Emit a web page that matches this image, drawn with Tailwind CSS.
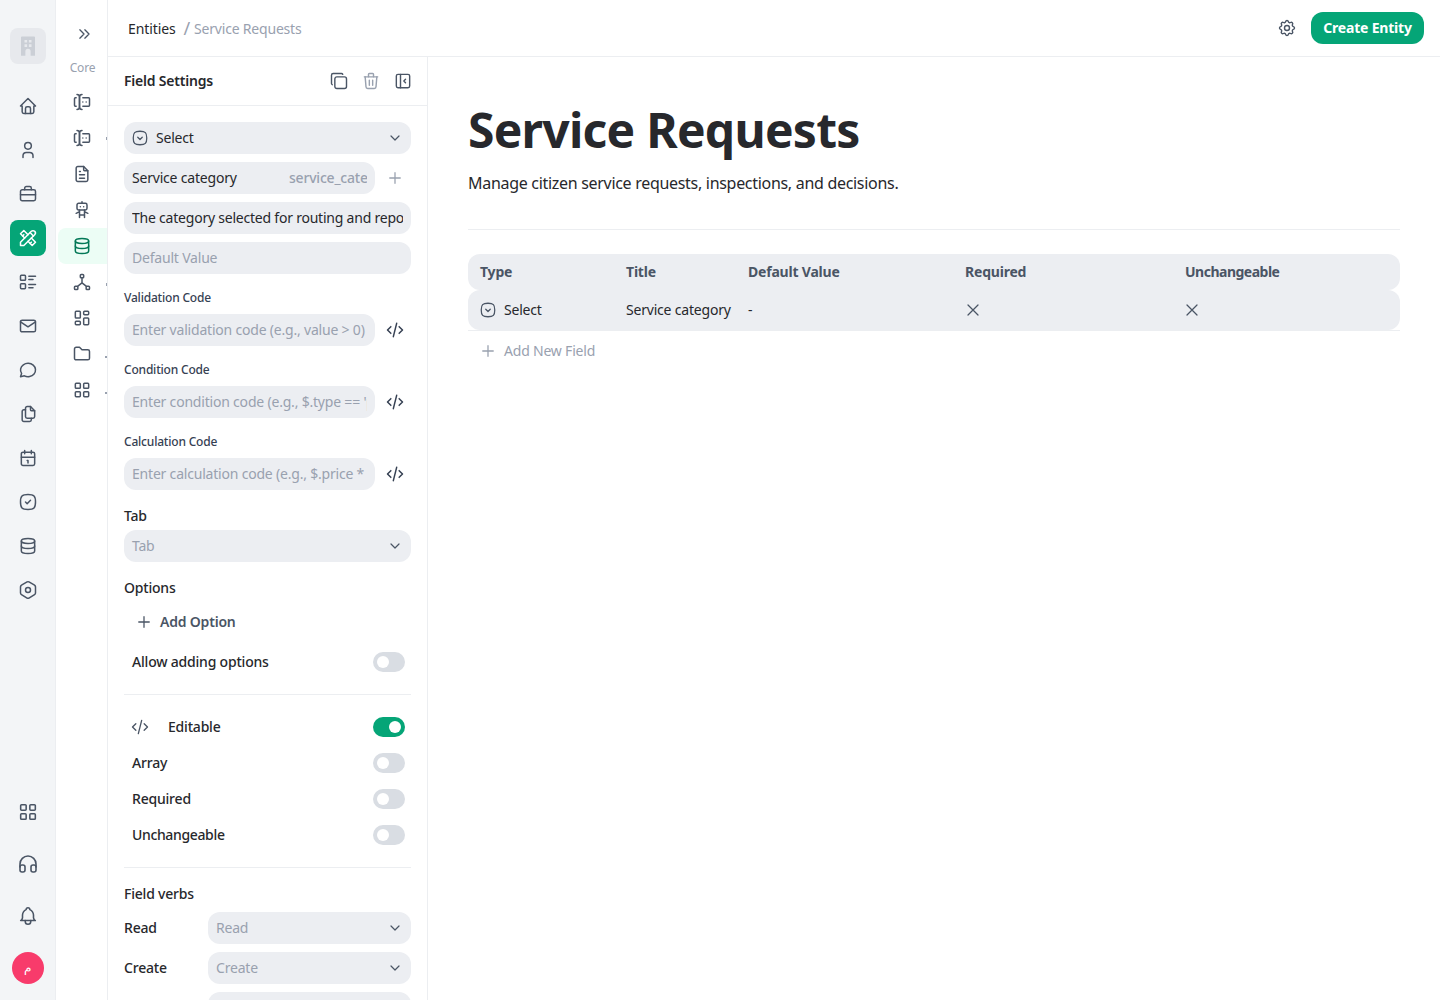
<!DOCTYPE html>
<html lang="en">
<head>
    <meta charset="UTF-8">
    <meta name="viewport" content="width=device-width, initial-scale=1.0">
    <title>Service Requests</title>
    <script src="https://cdn.jsdelivr.net/npm/@tailwindcss/browser@4"></script>
</head>
<body class="bg-white font-['Noto_Sans',sans-serif] tracking-[-0.2px] text-[#27282c] overflow-hidden">
    <svg class="hidden">
        <defs>
            <symbol id="home" viewBox="0 0 24 24"><path d="M5 12H3l9-9 9 9h-2M5 12v7a2 2 0 0 0 2 2h10a2 2 0 0 0 2-2v-7"/><path d="M9 21v-6a2 2 0 0 1 2-2h2a2 2 0 0 1 2 2v6"/></symbol>
            <symbol id="user" viewBox="0 0 24 24"><path d="M8 7a4 4 0 1 0 8 0a4 4 0 0 0-8 0"/><path d="M6 21v-2a4 4 0 0 1 4-4h4a4 4 0 0 1 4 4v2"/></symbol>
            <symbol id="briefcase" viewBox="0 0 24 24"><path d="M3 9a2 2 0 0 1 2-2h14a2 2 0 0 1 2 2v9a2 2 0 0 1-2 2H5a2 2 0 0 1-2-2z"/><path d="M8 7V5a2 2 0 0 1 2-2h4a2 2 0 0 1 2 2v2"/><path d="M3 13h18"/></symbol>
            <symbol id="tools" viewBox="0 0 24 24"><path d="M3 21h4L20 8a1.5 1.5 0 0 0-4-4L3 17v4"/><path d="M14.500 5.500l4 4"/><path d="M12 8L7 3 3 7l5 5"/><path d="M7 8L5.500 9.500"/><path d="M16 12l5 5-4 4-5-5"/><path d="M16 17l-1.500 1.500"/></symbol>
            <symbol id="list" viewBox="0 0 24 24"><path d="M13 5h8M13 9h5M13 15h8M13 19h5"/><rect x="3" y="4" width="6" height="6" rx="1"/><rect x="3" y="14" width="6" height="6" rx="1"/></symbol>
            <symbol id="mail" viewBox="0 0 24 24"><rect x="3" y="5" width="18" height="14" rx="2"/><path d="M3 7l9 6 9-6"/></symbol>
            <symbol id="message" viewBox="0 0 24 24"><path d="M3 20l1.300-3.900C1.976 12.663 2.874 8.228 6.400 5.726c3.526-2.501 8.590-2.296 11.845.48 3.255 2.777 3.695 7.266 1.029 10.501C16.608 19.942 11.659 20.922 7.700 19L3 20"/></symbol>
            <symbol id="files" viewBox="0 0 24 24"><path d="M15 3v4a1 1 0 0 0 1 1h4"/><path d="M18 17h-7a2 2 0 0 1-2-2V5a2 2 0 0 1 2-2h4l5 5v7a2 2 0 0 1-2 2z"/><path d="M16 17v2a2 2 0 0 1-2 2H7a2 2 0 0 1-2-2V9a2 2 0 0 1 2-2h2"/></symbol>
            <symbol id="calendar" viewBox="0 0 24 24"><rect x="4" y="5" width="16" height="16" rx="2"/><path d="M16 3v4M8 3v4M4 11h16M11 15h1M12 15v3"/></symbol>
            <symbol id="check" viewBox="0 0 24 24"><path d="M9 12l2 2 4-4"/><path d="M12 3c7.200 0 9 1.800 9 9s-1.800 9-9 9-9-1.800-9-9 1.800-9 9-9z"/></symbol>
            <symbol id="database" viewBox="0 0 24 24"><ellipse cx="12" cy="6" rx="8" ry="3"/><path d="M4 6v6a8 3 0 0 0 16 0V6"/><path d="M4 12v6a8 3 0 0 0 16 0v-6"/></symbol>
            <symbol id="hexagon" viewBox="0 0 24 24"><path d="M19.875 6.270A2.225 2.225 0 0 1 21 8.218v7.284c0 .809-.443 1.555-1.158 1.948l-6.750 4.270a2.269 2.269 0 0 1-2.184 0l-6.750-4.270A2.225 2.225 0 0 1 3 15.502V8.217c0-.809.443-1.554 1.158-1.947l6.750-3.980a2.330 2.330 0 0 1 2.250 0z"/><circle cx="12" cy="12" r="3"/></symbol>
            <symbol id="grid" viewBox="0 0 24 24"><rect x="4" y="4" width="6" height="6" rx="1"/><rect x="14" y="4" width="6" height="6" rx="1"/><rect x="4" y="14" width="6" height="6" rx="1"/><rect x="14" y="14" width="6" height="6" rx="1"/></symbol>
            <symbol id="headphones" viewBox="0 0 24 24"><rect x="4" y="13" width="5" height="7" rx="2"/><rect x="15" y="13" width="5" height="7" rx="2"/><path d="M4 15v-3a8 8 0 0 1 16 0v3"/></symbol>
            <symbol id="bell" viewBox="0 0 24 24"><path d="M10 5a2 2 0 1 1 4 0 7 7 0 0 1 4 6v3a4 4 0 0 0 2 3H4a4 4 0 0 0 2-3v-3a7 7 0 0 1 4-6"/><path d="M9 17v1a3 3 0 0 0 6 0v-1"/></symbol>
            <symbol id="forms" viewBox="0 0 24 24"><path d="M12 3a3 3 0 0 0-3 3v12a3 3 0 0 0 3 3"/><path d="M6 3a3 3 0 0 1 3 3v12a3 3 0 0 1-3 3"/><path d="M13 7h7a1 1 0 0 1 1 1v8a1 1 0 0 1-1 1h-7"/><path d="M5 7H4a1 1 0 0 0-1 1v8a1 1 0 0 0 1 1h1"/><path d="M17 12h.01M13 12h.01"/></symbol>
            <symbol id="file" viewBox="0 0 24 24"><path d="M14 3v4a1 1 0 0 0 1 1h4"/><path d="M17 21H7a2 2 0 0 1-2-2V5a2 2 0 0 1 2-2h7l5 5v11a2 2 0 0 1-2 2z"/><path d="M9 9h1M9 13h6M9 17h6"/></symbol>
            <symbol id="robot" viewBox="0 0 24 24"><rect x="6" y="4" width="12" height="8" rx="2"/><path d="M12 2v2M9 12v9M15 12v9M5 16l4-2M15 14l4 2M9 18h6M10 8v.01M14 8v.01"/></symbol>
            <symbol id="hierarchy" viewBox="0 0 24 24"><rect x="10" y="3" width="4" height="4" rx="1"/><rect x="3" y="17" width="4" height="4" rx="1"/><rect x="17" y="17" width="4" height="4" rx="1"/><path d="M7 17l5-4 5 4M12 7v6"/></symbol>
            <symbol id="dashboard" viewBox="0 0 24 24"><rect x="4" y="4" width="6" height="8" rx="1"/><rect x="4" y="16" width="6" height="4" rx="1"/><rect x="14" y="12" width="6" height="8" rx="1"/><rect x="14" y="4" width="6" height="4" rx="1"/></symbol>
            <symbol id="folder" viewBox="0 0 24 24"><path d="M5 4h4l3 3h7a2 2 0 0 1 2 2v8a2 2 0 0 1-2 2H5a2 2 0 0 1-2-2V6a2 2 0 0 1 2-2"/></symbol>
            <symbol id="copy" viewBox="0 0 24 24"><rect x="7" y="7" width="14" height="14" rx="2.500"/><path d="M4 16.500A2 2 0 0 1 3 15V5a2 2 0 0 1 2-2h10c.75 0 1.200.4 1.500 1"/></symbol>
            <symbol id="trash" viewBox="0 0 24 24"><path d="M4 7h16M10 11v6M14 11v6"/><path d="M5 7l1 12a2 2 0 0 0 2 2h8a2 2 0 0 0 2-2l1-12"/><path d="M9 7V4a1 1 0 0 1 1-1h4a1 1 0 0 1 1 1v3"/></symbol>
            <symbol id="sidebar" viewBox="0 0 24 24"><rect x="4" y="4" width="16" height="16" rx="2"/><path d="M9 4v16M15 10l-2 2 2 2"/></symbol>
            <symbol id="code" viewBox="0 0 24 24"><path d="M7 8l-4 4 4 4M17 8l4 4-4 4M14 4l-4 16"/></symbol>
            <symbol id="chevron" viewBox="0 0 24 24"><path d="M6 9l6 6 6-6"/></symbol>
            <symbol id="chevrons" viewBox="0 0 24 24"><path d="M7 7l5 5-5 5M13 7l5 5-5 5"/></symbol>
            <symbol id="plus" viewBox="0 0 24 24"><path d="M12 5v14M5 12h14"/></symbol>
            <symbol id="x" viewBox="0 0 24 24"><path d="M18 6L6 18M6 6l12 12"/></symbol>
            <symbol id="select" viewBox="0 0 24 24"><path d="M15 11l-3 3-3-3"/><path d="M12 3c7.200 0 9 1.800 9 9s-1.800 9-9 9-9-1.800-9-9 1.800-9 9-9z"/></symbol>
            <symbol id="gear" viewBox="0 0 24 24"><path d="M10.325 4.317c.426-1.756 2.924-1.756 3.350 0a1.724 1.724 0 0 0 2.573 1.066c1.543-.940 3.310.826 2.370 2.370a1.724 1.724 0 0 0 1.065 2.572c1.756.426 1.756 2.924 0 3.350a1.724 1.724 0 0 0-1.066 2.573c.940 1.543-.826 3.310-2.370 2.370a1.724 1.724 0 0 0-2.572 1.065c-.426 1.756-2.924 1.756-3.350 0a1.724 1.724 0 0 0-2.573-1.066c-1.543.940-3.310-.826-2.370-2.370a1.724 1.724 0 0 0-1.065-2.572c-1.756-.426-1.756-2.924 0-3.350a1.724 1.724 0 0 0 1.066-2.573c-.940-1.543.826-3.310 2.370-2.370 1 .608 2.296.070 2.572-1.065z"/><circle cx="12" cy="12" r="3"/></symbol>
        </defs>
    </svg>

    <div class="flex h-screen [stroke-linecap:round] [stroke-linejoin:round]">
        <!-- main rail -->
        <aside class="w-14 shrink-0 bg-[#f3f5f7] border-r border-[#eceef1] flex flex-col items-center pt-7 pb-3.5 text-gray-600">
            <div class="w-9 h-9 rounded-lg bg-[#e7e9ed] flex items-center justify-center mb-6">
                <svg class="w-[14px] h-[20px] text-[#cbcfd6]" viewBox="1 0 16 22" fill="currentColor"><path fill-rule="evenodd" d="M2 0h14a1 1 0 0 1 1 1v21h-5v-5a3 3 0 0 0-6 0v5H1V1a1 1 0 0 1 1-1zm3 4v3h3V4zm5 0v3h3V4zM5 9v3h3V9zm5 0v3h3V9z"/></svg>
            </div>
            <nav class="flex flex-col items-center gap-2">
                <a class="w-9 h-9 flex items-center justify-center"><svg class="w-5 h-5 fill-none stroke-current stroke-[1.8]"><use href="#home"/></svg></a>
                <a class="w-9 h-9 flex items-center justify-center"><svg class="w-5 h-5 fill-none stroke-current stroke-[1.8]"><use href="#user"/></svg></a>
                <a class="w-9 h-9 flex items-center justify-center"><svg class="w-5 h-5 fill-none stroke-current stroke-[1.8]"><use href="#briefcase"/></svg></a>
                <a class="w-9 h-9 rounded-lg bg-[#05a577] text-white flex items-center justify-center"><svg class="w-5 h-5 fill-none stroke-current stroke-[1.8]"><use href="#tools"/></svg></a>
                <a class="w-9 h-9 flex items-center justify-center"><svg class="w-5 h-5 fill-none stroke-current stroke-[1.8]"><use href="#list"/></svg></a>
                <a class="w-9 h-9 flex items-center justify-center"><svg class="w-5 h-5 fill-none stroke-current stroke-[1.8]"><use href="#mail"/></svg></a>
                <a class="w-9 h-9 flex items-center justify-center"><svg class="w-5 h-5 fill-none stroke-current stroke-[1.8]"><use href="#message"/></svg></a>
                <a class="w-9 h-9 flex items-center justify-center"><svg class="w-5 h-5 fill-none stroke-current stroke-[1.8]"><use href="#files"/></svg></a>
                <a class="w-9 h-9 flex items-center justify-center"><svg class="w-5 h-5 fill-none stroke-current stroke-[1.8]"><use href="#calendar"/></svg></a>
                <a class="w-9 h-9 flex items-center justify-center"><svg class="w-5 h-5 fill-none stroke-current stroke-[1.8]"><use href="#check"/></svg></a>
                <a class="w-9 h-9 flex items-center justify-center"><svg class="w-5 h-5 fill-none stroke-current stroke-[1.8]"><use href="#database"/></svg></a>
                <a class="w-9 h-9 flex items-center justify-center"><svg class="w-5 h-5 fill-none stroke-current stroke-[1.8]"><use href="#hexagon"/></svg></a>
            </nav>
            <div class="mt-auto flex flex-col items-center gap-4">
                <a class="w-9 h-9 flex items-center justify-center"><svg class="w-[22px] h-[22px] fill-none stroke-current stroke-[1.7]"><use href="#grid"/></svg></a>
                <a class="w-9 h-9 flex items-center justify-center"><svg class="w-6 h-6 fill-none stroke-current stroke-[1.6]"><use href="#headphones"/></svg></a>
                <a class="w-9 h-9 flex items-center justify-center"><svg class="w-[22px] h-[22px] fill-none stroke-current stroke-[1.7]"><use href="#bell"/></svg></a>
                <div class="h-9 flex items-center"><div class="w-8 h-8 rounded-full bg-[#f83b6b] text-white text-xs flex items-center justify-center">م</div></div>
            </div>
        </aside>

        <!-- secondary rail -->
        <aside class="w-[52px] shrink-0 border-r border-[#eceef1] flex flex-col pl-0.5 text-gray-600">
            <div class="h-[68px] shrink-0 flex flex-col items-center pl-[3px]">
                <svg class="shrink-0 w-5 h-5 mt-6 fill-none stroke-current stroke-[1.6]"><use href="#chevrons"/></svg>
                <span class="shrink-0 -ml-[3px] mt-4 text-xs leading-4 text-gray-400">Core</span>
            </div>
            <nav class="flex flex-col mt-4">
                <a class="h-9 flex items-center pl-[14px]"><svg class="w-5 h-5 fill-none stroke-current stroke-[1.8]"><use href="#forms"/></svg></a>
                <a class="relative h-9 flex items-center pl-[14px]"><svg class="w-5 h-5 fill-none stroke-current stroke-[1.8]"><use href="#forms"/></svg><span class="absolute right-0 top-[17px] w-px h-[3px] bg-gray-400"></span></a>
                <a class="h-9 flex items-center pl-[14px]"><svg class="w-5 h-5 fill-none stroke-current stroke-[1.8]"><use href="#file"/></svg></a>
                <a class="h-9 flex items-center pl-[14px]"><svg class="w-5 h-5 fill-none stroke-current stroke-[1.8]"><use href="#robot"/></svg></a>
                <a class="h-9 flex items-center pl-[14px] rounded-l-lg bg-[#ecfdf5] text-[#047857]"><svg class="w-5 h-5 fill-none stroke-current stroke-[1.8]"><use href="#database"/></svg></a>
                <a class="relative h-9 flex items-center pl-[14px]"><svg class="w-5 h-5 fill-none stroke-current stroke-[1.8]"><use href="#hierarchy"/></svg><span class="absolute right-0 top-[19px] w-px h-[3px] bg-gray-400"></span></a>
                <a class="h-9 flex items-center pl-[14px]"><svg class="w-5 h-5 fill-none stroke-current stroke-[1.8]"><use href="#dashboard"/></svg></a>
                <a class="relative h-9 flex items-center pl-[14px]"><svg class="w-5 h-5 fill-none stroke-current stroke-[1.8]"><use href="#folder"/></svg><span class="absolute right-0 top-[20px] w-0.5 h-0.5 bg-gray-400"></span></a>
                <a class="relative h-9 flex items-center pl-[14px]"><svg class="w-5 h-5 fill-none stroke-current stroke-[1.8]"><use href="#grid"/></svg><span class="absolute right-0 top-[20px] w-0.5 h-0.5 bg-gray-400"></span></a>
            </nav>
        </aside>

        <div class="flex-1 min-w-0 flex flex-col">
            <!-- top bar -->
            <header class="h-[57px] shrink-0 border-b border-[#eceef1] flex items-center pl-5 pr-4">
                <span class="pt-0.5 text-sm tracking-[-0.1px]">Entities</span>
                <span class="ml-2 text-lg leading-6 text-gray-400">/</span>
                <span class="ml-1 pt-0.5 text-sm text-gray-400">Service Requests</span>
                <svg class="ml-auto w-5 h-5 text-gray-600 fill-none stroke-current stroke-[1.7]"><use href="#gear"/></svg>
                <button class="ml-[14px] h-8 w-[113px] rounded-xl bg-[#05a577] text-white text-sm font-bold">Create Entity</button>
            </header>

            <div class="flex flex-1 min-h-0">
                <!-- field settings -->
                <section class="w-80 shrink-0 border-r border-[#eceef1] overflow-hidden">
                    <div class="h-[49px] border-b border-[#eceef1] flex items-center px-4">
                        <h2 class="text-sm font-semibold">Field Settings</h2>
                        <div class="ml-auto -mr-0.5 flex items-center gap-3 text-gray-600">
                            <svg class="w-5 h-5 fill-none stroke-current stroke-[1.7]"><use href="#copy"/></svg>
                            <svg class="w-5 h-5 text-gray-400 fill-none stroke-current stroke-[1.7]"><use href="#trash"/></svg>
                            <svg class="w-5 h-5 fill-none stroke-current stroke-[1.7]"><use href="#sidebar"/></svg>
                        </div>
                    </div>

                    <div class="p-4 flex flex-col">
                        <div class="h-8 rounded-xl bg-[#eceef2] flex items-center pl-[7px] pr-2 text-sm">
                            <svg class="w-[18px] h-[18px] text-gray-600 fill-none stroke-current stroke-[1.7]"><use href="#select"/></svg>
                            <span class="ml-[7px]">Select</span>
                            <svg class="ml-auto w-4 h-4 text-gray-600 fill-none stroke-current stroke-[1.8]"><use href="#chevron"/></svg>
                        </div>
                        <div class="mt-2 flex items-center">
                            <div class="h-8 w-[251px] rounded-xl bg-[#eceef2] flex items-center px-2 text-sm">
                                <input class="w-[157px] min-w-0 bg-transparent outline-none" value="Service category">
                                <input class="flex-1 min-w-0 bg-transparent outline-none text-gray-400 font-medium" value="service_category">
                            </div>
                            <svg class="ml-[11px] w-[18px] h-[18px] text-gray-400 fill-none stroke-current stroke-[1.7]"><use href="#plus"/></svg>
                        </div>
                        <input class="mt-2 h-8 rounded-xl bg-[#eceef2] px-2 pb-0.5 text-sm tracking-[-0.22px] outline-none" value="The category selected for routing and reporting">
                        <input class="mt-2 h-8 rounded-xl bg-[#eceef2] px-2 pb-0.5 text-sm outline-none placeholder:text-gray-400" placeholder="Default Value">

                        <label class="mt-4 h-4 text-xs leading-4 font-medium text-gray-700">Validation Code</label>
                        <div class="mt-2 flex items-center">
                            <input class="h-8 w-[251px] rounded-xl bg-[#eceef2] px-2 pb-0.5 text-sm outline-none placeholder:text-gray-400" placeholder="Enter validation code (e.g., value > 0)">
                            <svg class="ml-[10px] w-5 h-5 text-gray-700 fill-none stroke-current stroke-[1.8]"><use href="#code"/></svg>
                        </div>
                        <label class="mt-4 h-4 text-xs leading-4 font-medium text-gray-700">Condition Code</label>
                        <div class="mt-2 flex items-center">
                            <input class="h-8 w-[251px] rounded-xl bg-[#eceef2] px-2 pb-0.5 text-sm outline-none placeholder:text-gray-400" placeholder="Enter condition code (e.g., $.type == 'premium')">
                            <svg class="ml-[10px] w-5 h-5 text-gray-700 fill-none stroke-current stroke-[1.8]"><use href="#code"/></svg>
                        </div>
                        <label class="mt-4 h-4 text-xs leading-4 font-medium text-gray-700">Calculation Code</label>
                        <div class="mt-2 flex items-center">
                            <input class="h-8 w-[251px] rounded-xl bg-[#eceef2] px-2 pb-0.5 text-sm outline-none placeholder:text-gray-400" placeholder="Enter calculation code (e.g., $.price * 2)">
                            <svg class="ml-[10px] w-5 h-5 text-gray-700 fill-none stroke-current stroke-[1.8]"><use href="#code"/></svg>
                        </div>

                        <label class="mt-4 h-5 text-sm leading-5 font-medium">Tab</label>
                        <div class="mt-1 h-8 rounded-xl bg-[#eceef2] flex items-center pl-2 pr-2 text-sm text-gray-400">
                            Tab
                            <svg class="ml-auto w-4 h-4 text-gray-600 fill-none stroke-current stroke-[1.8]"><use href="#chevron"/></svg>
                        </div>

                        <h3 class="mt-4 h-5 text-sm leading-5 font-medium">Options</h3>
                        <button class="mt-2 h-8 pl-[11px] flex items-center text-sm font-semibold text-gray-600">
                            <svg class="w-[18px] h-[18px] fill-none stroke-current stroke-[1.7]"><use href="#plus"/></svg>
                            <span class="ml-[7px]">Add Option</span>
                        </button>
                        <div class="mt-2 h-8 flex items-center pl-2 pr-1.5 text-sm font-medium">
                            Allow adding options
                            <span class="ml-auto w-8 h-5 rounded-full bg-[#d9dde3] p-1"><span class="block w-3 h-3 rounded-full bg-white"></span></span>
                        </div>

                        <div class="mt-4 border-t border-[#eceef1]"></div>

                        <div class="mt-4 h-8 flex items-center pl-1.5 pr-1.5 text-sm font-medium">
                            <svg class="w-5 h-5 text-gray-600 fill-none stroke-current stroke-[1.6]"><use href="#code"/></svg>
                            <span class="ml-[18px]">Editable</span>
                            <span class="ml-auto w-8 h-5 rounded-full bg-[#05a577] p-1 flex justify-end"><span class="block w-3 h-3 rounded-full bg-white"></span></span>
                        </div>
                        <div class="mt-1 h-8 flex items-center pl-2 pr-1.5 text-sm font-medium">
                            Array
                            <span class="ml-auto w-8 h-5 rounded-full bg-[#d9dde3] p-1"><span class="block w-3 h-3 rounded-full bg-white"></span></span>
                        </div>
                        <div class="mt-1 h-8 flex items-center pl-2 pr-1.5 text-sm font-medium">
                            Required
                            <span class="ml-auto w-8 h-5 rounded-full bg-[#d9dde3] p-1"><span class="block w-3 h-3 rounded-full bg-white"></span></span>
                        </div>
                        <div class="mt-1 h-8 flex items-center pl-2 pr-1.5 text-sm font-medium">
                            <span class="tracking-[-0.35px]">Unchangeable</span>
                            <span class="ml-auto w-8 h-5 rounded-full bg-[#d9dde3] p-1"><span class="block w-3 h-3 rounded-full bg-white"></span></span>
                        </div>

                        <div class="mt-4 border-t border-[#eceef1]"></div>

                        <h3 class="mt-4 h-5 text-sm leading-5 font-medium">Field verbs</h3>
                        <div class="mt-2 flex items-center text-sm font-medium">
                            <span class="w-[84px]">Read</span>
                            <div class="flex-1 h-8 rounded-xl bg-[#eceef2] flex items-center px-2 font-normal text-gray-400">Read<svg class="ml-auto w-4 h-4 text-gray-600 fill-none stroke-current stroke-[1.8]"><use href="#chevron"/></svg></div>
                        </div>
                        <div class="mt-2 flex items-center text-sm font-medium">
                            <span class="w-[84px]">Create</span>
                            <div class="flex-1 h-8 rounded-xl bg-[#eceef2] flex items-center px-2 font-normal text-gray-400">Create<svg class="ml-auto w-4 h-4 text-gray-600 fill-none stroke-current stroke-[1.8]"><use href="#chevron"/></svg></div>
                        </div>
                        <div class="mt-2 flex items-center">
                            <span class="w-[84px]"></span>
                            <div class="flex-1 h-8 rounded-xl bg-[#eceef2]"></div>
                        </div>
                    </div>
                </section>

                <!-- entity content -->
                <main class="flex-1 min-w-0 px-10 pt-[41px]">
                    <h1 class="text-5xl leading-[64px] font-bold tracking-[-0.75px]">Service Requests</h1>
                    <p class="mt-[9px] text-base leading-6 tracking-[-0.3px]">Manage citizen service requests, inspections, and decisions.</p>
                    <div class="mt-[34px] border-t border-[#eceef1]"></div>

                    <div class="mt-6 border-b border-[#eceef1]">
                        <div class="h-9 rounded-xl bg-[#eceef2] px-3 grid grid-cols-[146px_122px_217px_220px_1fr] items-center text-sm font-bold text-gray-600">
                            <span>Type</span>
                            <span>Title</span>
                            <span>Default Value</span>
                            <span>Required</span>
                            <span class="tracking-[-0.5px]">Unchangeable</span>
                        </div>
                        <div class="h-10 rounded-xl bg-[#eceef2] px-3 grid grid-cols-[146px_122px_217px_220px_1fr] items-center text-sm">
                            <span class="flex items-center gap-[7px] -ml-px"><svg class="w-[18px] h-[18px] text-gray-600 fill-none stroke-current stroke-[1.7]"><use href="#select"/></svg>Select</span>
                            <span>Service category</span>
                            <span>-</span>
                            <svg class="w-5 h-5 -ml-0.5 text-gray-600 fill-none stroke-current stroke-[1.5]"><use href="#x"/></svg>
                            <svg class="w-5 h-5 -ml-[3px] text-gray-600 fill-none stroke-current stroke-[1.5]"><use href="#x"/></svg>
                        </div>
                    </div>
                    <button class="mt-1 h-8 pl-[11px] flex items-center text-sm text-gray-400">
                        <svg class="w-[18px] h-[18px] fill-none stroke-current stroke-[1.7]"><use href="#plus"/></svg>
                        <span class="ml-[7px]">Add New Field</span>
                    </button>
                </main>
            </div>
        </div>
    </div>
</body>
</html>
